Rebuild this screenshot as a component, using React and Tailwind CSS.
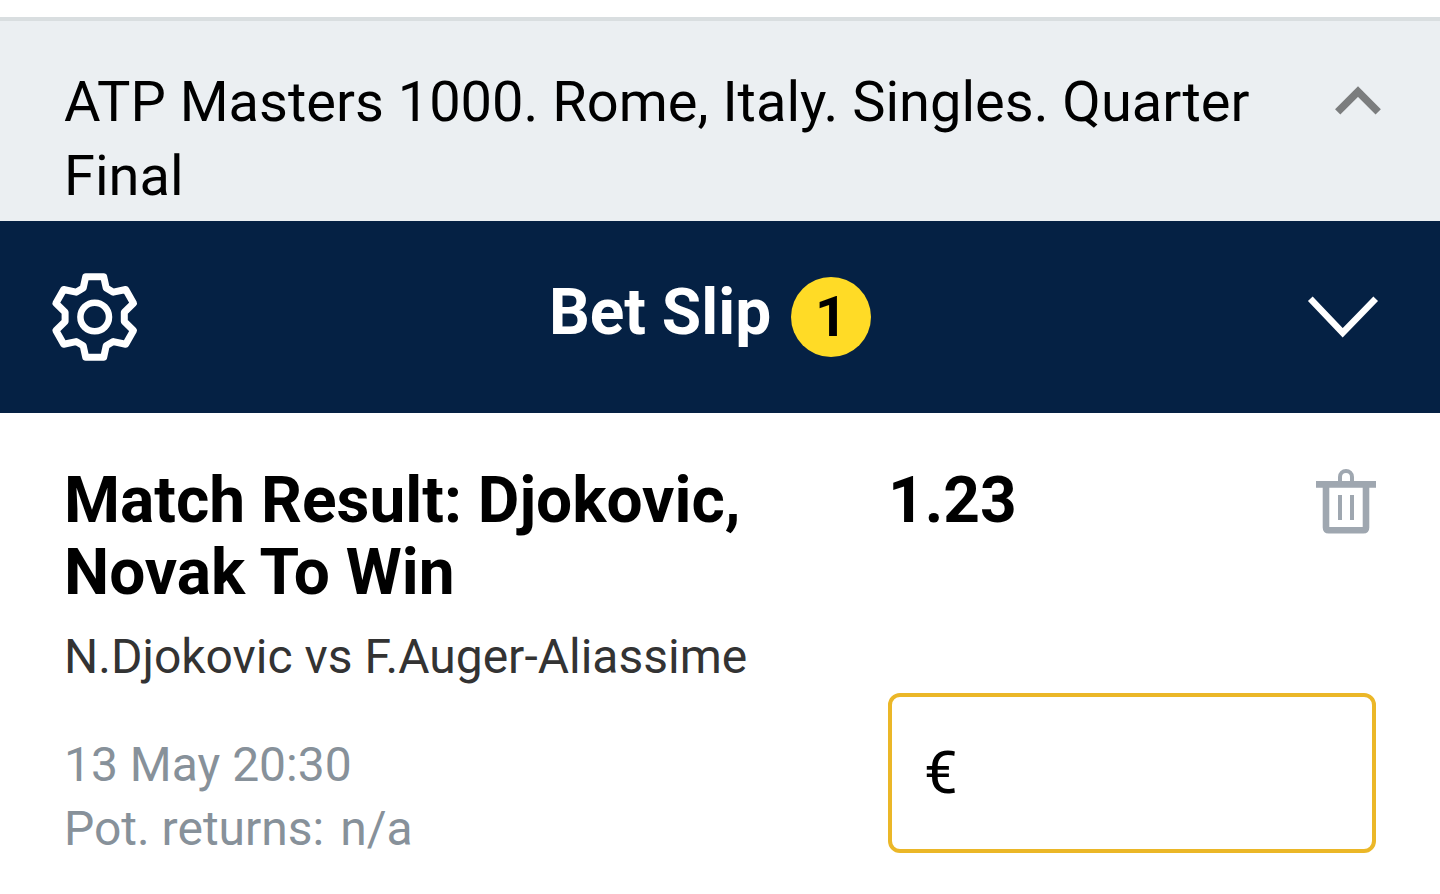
export default function App() {
  return (
    <div className="min-h-screen bg-white pt-[17px] font-['Roboto',sans-serif] text-black">
      <header className="flex items-start justify-between border-t-4 border-[#d9dee0] bg-[#ebeff2] pt-11 pr-14 pb-2 pl-16">
        <h1 className="w-[1200px] max-w-[90%] text-[56px] leading-[74px]">
          ATP Masters 1000. Rome, Italy. Singles. Quarter Final
        </h1>
        <button type="button" aria-label="Collapse event" className="mt-4">
          <svg width="52" height="40" viewBox="0 0 52 40" fill="none" stroke="#7b7d7e" strokeWidth="7.5">
            <path d="M5.7 30.8 26 10.6 46.2 30.8" />
          </svg>
        </button>
      </header>
      <section aria-label="Bet Slip">
        <div className="grid h-48 grid-cols-[92px_1fr_104px] items-center bg-[#052144] pr-14 pl-12 text-white">
          <button type="button" aria-label="Settings">
            <svg width="92" height="92" viewBox="0 0 92 92" fill="none" stroke="white" strokeWidth="7" strokeLinejoin="round">
              <path d="M37.7 5.7H55.7L58.2 17 65.3 21.2 77.7 18.5 85.5 32.3 76.3 41.3V50.5L85.5 59.5 77.7 73.2 65.3 70.6 58.2 74.8 55.7 86.2H37.7L35.2 74.8 28.1 70.6 15.7 73.2 7.9 59.5 17.1 50.5V41.3L7.9 32.3 15.7 18.5 28.1 21.2 35.2 17Z" />
              <circle cx="46.7" cy="46" r="14.3" strokeWidth="6.5" />
            </svg>
          </button>
          <div className="flex items-center justify-center gap-5">
            <h2 className="mb-2 text-[64px] leading-[72px] font-bold">Bet Slip</h2>
            <span className="flex size-20 items-center justify-center rounded-full bg-[#ffdb26] text-[56px] leading-none font-bold text-black">1</span>
          </div>
          <button type="button" aria-label="Close bet slip" className="justify-self-end">
            <svg width="80" height="56" viewBox="0 0 80 56" fill="none" stroke="white" strokeWidth="6.5">
              <path d="M6.3 9.8 38.7 43.8 71.7 9.8" />
            </svg>
          </button>
        </div>
        <article className="flex justify-between px-16 pt-[52px]">
          <div className="w-[760px]">
            <h3 className="w-[700px] text-[64px] leading-[72px] font-bold">Match Result: Djokovic, Novak To Win</h3>
            <p className="mt-4 text-[48px] leading-[64px] text-[#333333]">N.Djokovic vs F.Auger-Aliassime</p>
            <div className="mt-11 text-[48px] leading-[64px] text-[#87919a]">
              <p>13 May 20:30</p>
              <p className="flex gap-4">
                <span>Pot. returns:</span>
                <span>n/a</span>
              </p>
            </div>
          </div>
          <div className="w-[488px]">
            <div className="flex h-[228px] items-start justify-between">
              <strong className="text-[64px] leading-[72px] font-bold">1.23</strong>
              <button type="button" aria-label="Remove bet">
                <svg width="60" height="72" viewBox="0 0 60 72" fill="none" stroke="#9fa7b0">
                  <path strokeWidth="6.6" d="M0 19.4H60M10 19.4V62.5Q10 65.2 12.7 65.2H47.3Q50 65.2 50 62.5V19.4" />
                  <path strokeWidth="4" d="M24 18V12A6 6 0 0 1 36 12V18M24 30V55M36 30V55" />
                </svg>
              </button>
            </div>
            <label className="flex h-40 items-center rounded-xl border-4 border-[#ebb728] px-8 text-[60px]">
              <span>€</span>
              <input type="text" inputMode="decimal" aria-label="Stake" className="ml-2 w-full min-w-0 bg-transparent outline-none" />
            </label>
          </div>
        </article>
      </section>
    </div>
  );
}
